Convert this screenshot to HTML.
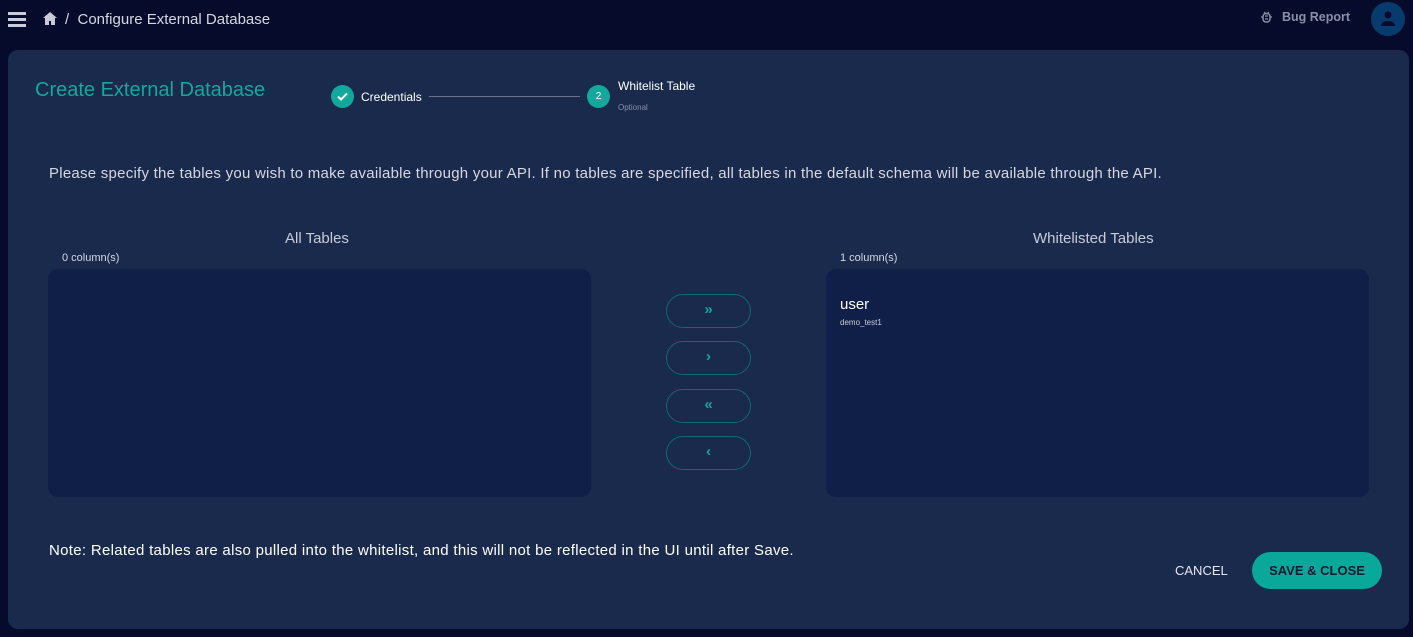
<!DOCTYPE html>
<html><head><style>
*{box-sizing:border-box;margin:0;padding:0}
body{width:1413px;height:637px;background:#070b2b;font-family:"Liberation Sans",sans-serif;color:#fff;position:relative;overflow:hidden}
.a{position:absolute}
.card{left:8px;top:50px;width:1401px;height:579px;background:#1a2a4c;border-radius:10px}
.panel{background:#0f1f47;border-radius:10px}
.btn{left:666px;width:85px;height:34px;border:1.5px solid #0e6b73;border-radius:17px;color:#12a89c;font-size:15px;font-weight:bold;text-align:center;line-height:30px}
</style></head><body>
<div class="a" style="left:8px;top:12px;width:18px;height:14px">
<div style="height:2.5px;background:#c9ccd8;margin-bottom:3.5px"></div><div style="height:2.5px;background:#c9ccd8;margin-bottom:3.5px"></div><div style="height:2.5px;background:#c9ccd8"></div></div>
<svg class="a" style="left:43px;top:12px" width="14" height="13" viewBox="0 0 14 13"><path d="M7 0L0 6h2v7h4V9h2v4h4V6h2z" fill="#c9ccd8"/></svg>
<div class="a" style="left:65px;top:11px;font-size:15px;color:#d5d8e2">/ &nbsp;Configure External Database</div>
<svg class="a" style="left:1261px;top:11px" width="11" height="12" viewBox="0 0 11 12"><rect x="2" y="2.5" width="7" height="8.5" rx="3" fill="none" stroke="#8a90a8" stroke-width="1.5"/><path d="M3 1l1.5 1.5M8 1L6.5 2.5M0 6h2M9 6h2M4 5h3M4 8h3" stroke="#8a90a8" stroke-width="1.2"/></svg>
<div class="a" style="left:1282px;top:10px;font-size:12.5px;font-weight:bold;color:#8a90a8">Bug Report</div>
<div class="a" style="left:1371px;top:2px;width:34px;height:34px;border-radius:50%;background:#063b6e"></div>
<svg class="a" style="left:1379px;top:10px" width="18" height="18" viewBox="0 0 18 18"><circle cx="9" cy="5" r="3.5" fill="#070b2b"/><path d="M2 16c0-4 4-5 7-5s7 1 7 5z" fill="#070b2b"/></svg>
<div class="a card"></div>
<div class="a" style="left:35px;top:79px;font-size:20px;color:#12a89c">Create External Database</div>
<div class="a" style="left:331px;top:85px;width:23px;height:23px;border-radius:50%;background:#12a89c"></div>
<svg class="a" style="left:335px;top:89px" width="15" height="15" viewBox="0 0 15 15"><path d="M3 7.5l3 3 6-6" stroke="#fff" stroke-width="2" fill="none"/></svg>
<div class="a" style="left:361px;top:90px;font-size:12px">Credentials</div>
<div class="a" style="left:429px;top:96px;width:151px;height:1px;background:#6b7288"></div>
<div class="a" style="left:587px;top:85px;width:23px;height:23px;border-radius:50%;background:#12a89c;font-size:10px;text-align:center;line-height:23px;color:#fff">2</div>
<div class="a" style="left:618px;top:79px;font-size:12px">Whitelist Table</div>
<div class="a" style="left:618px;top:103px;font-size:8px;color:#8a90a8">Optional</div>
<div class="a" style="left:49px;top:165px;font-size:15px;letter-spacing:0.25px;color:#d5d8e2">Please specify the tables you wish to make available through your API. If no tables are specified, all tables in the default schema will be available through the API.</div>
<div class="a" style="left:285px;top:230px;font-size:15px;color:#c9ccd8">All Tables</div>
<div class="a" style="left:62px;top:252px;font-size:11px;color:#d5d8e2">0 column(s)</div>
<div class="a panel" style="left:48px;top:269px;width:543px;height:228px"></div>
<div class="a" style="left:1033px;top:230px;font-size:15px;color:#c9ccd8">Whitelisted Tables</div>
<div class="a" style="left:840px;top:252px;font-size:11px;color:#d5d8e2">1 column(s)</div>
<div class="a panel" style="left:826px;top:269px;width:543px;height:228px"></div>
<div class="a" style="left:840px;top:296px;font-size:15px">user</div>
<div class="a" style="left:840px;top:318px;font-size:8px;color:#c9ccd8">demo_test1</div>
<div class="a btn" style="top:294px">»</div>
<div class="a btn" style="top:341px">›</div>
<div class="a btn" style="top:389px">«</div>
<div class="a btn" style="top:436px">‹</div>
<div class="a" style="left:49px;top:542px;font-size:15px;letter-spacing:0.3px">Note: Related tables are also pulled into the whitelist, and this will not be reflected in the UI until after Save.</div>
<div class="a" style="left:1175px;top:563px;font-size:13px;color:#e5e7ee">CANCEL</div>
<div class="a" style="left:1252px;top:552px;width:130px;height:37px;border-radius:19px;background:#0aa79b;color:#0a1a2e;font-size:13px;font-weight:bold;text-align:center;line-height:37px">SAVE &amp; CLOSE</div>
</body></html>
